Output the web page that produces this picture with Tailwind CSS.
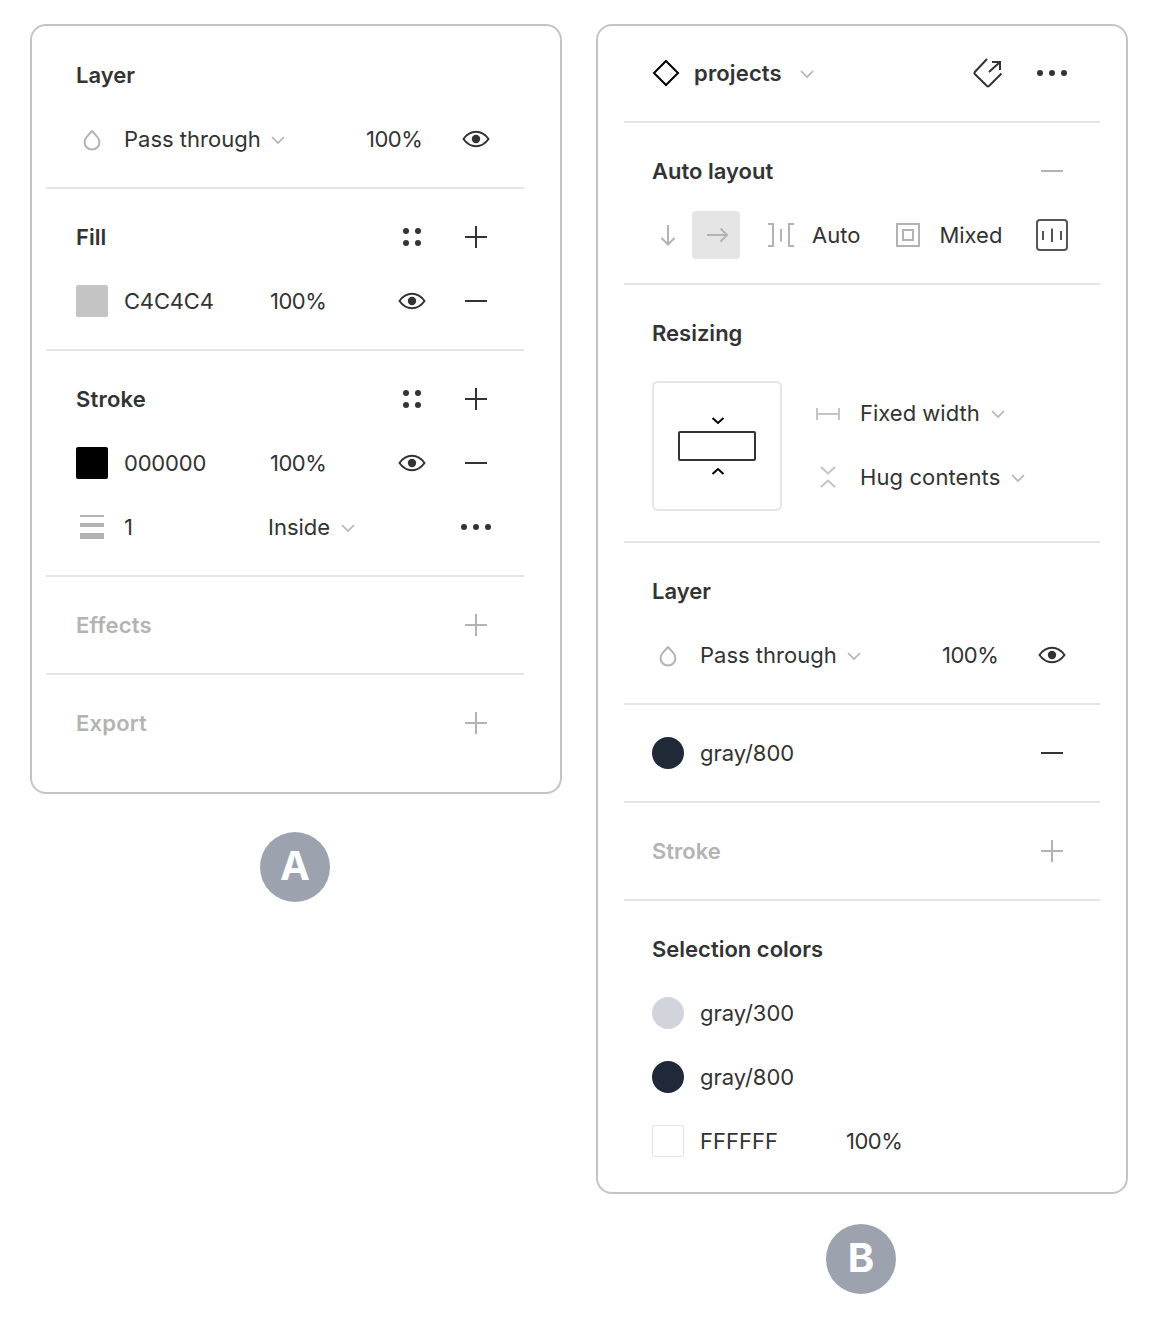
<!DOCTYPE html>
<html lang="en">
<head>
  <meta charset="UTF-8" />
  <title>Figma panels</title>
  <script src="https://cdn.jsdelivr.net/npm/@tailwindcss/browser@4"></script>
</head>
<body class="bg-white text-[#333333] font-['Inter',sans-serif] text-[22px] leading-8">
  <!-- shared icons -->
  <svg class="hidden">
    <symbol id="drop" viewBox="0 0 32 32"><path d="M16 8 L21.5 14.2 A7.4 7.4 0 1 1 10.5 14.2 Z" fill="none" stroke="currentColor" stroke-width="2" stroke-linejoin="round"/></symbol>
    <symbol id="chev" viewBox="0 0 16 16"><path d="M2 6 L8 12 L14 6" fill="none" stroke="currentColor" stroke-width="1.6"/></symbol>
    <symbol id="eye" viewBox="0 0 32 32"><path d="M3.5 16 C7 11 11 8.8 16 8.8 S25 11 28.5 16 C25 21 21 23.2 16 23.2 S7 21 3.5 16 Z" fill="none" stroke="currentColor" stroke-width="2"/><circle cx="16" cy="16" r="4.2" fill="currentColor"/></symbol>
    <symbol id="plus" viewBox="0 0 32 32"><path d="M5 16 H27 M16 5 V27" fill="none" stroke="currentColor" stroke-width="2"/></symbol>
    <symbol id="minus" viewBox="0 0 32 32"><path d="M5 16 H27" fill="none" stroke="currentColor" stroke-width="2"/></symbol>
    <symbol id="four" viewBox="0 0 32 32"><circle cx="10" cy="10" r="3" fill="currentColor"/><circle cx="22" cy="10" r="3" fill="currentColor"/><circle cx="10" cy="22" r="3" fill="currentColor"/><circle cx="22" cy="22" r="3" fill="currentColor"/></symbol>
    <symbol id="more" viewBox="0 0 32 32"><circle cx="4" cy="16" r="3" fill="currentColor"/><circle cx="16" cy="16" r="3" fill="currentColor"/><circle cx="28" cy="16" r="3" fill="currentColor"/></symbol>
  </svg>

  <div class="flex items-start gap-[34px] pl-[30px] pt-[24px]">
    <!-- Panel A -->
    <div class="w-[532px]">
      <div class="h-[770px] border-2 border-[#c4c4c4] rounded-2xl pl-[14px] pr-[36px]">
        <section class="pt-[33px] pb-8 pl-[30px] pr-8 border-b-2 border-[#e5e5e5] flex flex-col gap-8">
          <div class="h-8 font-semibold">Layer</div>
          <div class="h-8 flex items-center">
            <svg class="w-8 h-8 text-[#b3b3b3]"><use href="#drop"/></svg>
            <div class="ml-4 w-[242px] flex items-center gap-[9px]">Pass through <svg class="w-4 h-4 text-[#b3b3b3]"><use href="#chev"/></svg></div>
            <span class="tracking-[-0.5px]">100%</span>
            <svg class="ml-auto w-8 h-8"><use href="#eye"/></svg>
          </div>
        </section>

        <section class="py-8 pl-[30px] pr-8 border-b-2 border-[#e5e5e5] flex flex-col gap-8">
          <div class="h-8 flex items-center justify-between">
            <span class="font-semibold">Fill</span>
            <div class="flex gap-8">
              <svg class="w-8 h-8"><use href="#four"/></svg>
              <svg class="w-8 h-8"><use href="#plus"/></svg>
            </div>
          </div>
          <div class="h-8 flex items-center">
            <div class="w-8 h-8 bg-[#c4c4c4] rounded-[2px]"></div>
            <span class="ml-4 w-[146px] tracking-[-0.2px]">C4C4C4</span>
            <span class="tracking-[-0.5px]">100%</span>
            <div class="ml-auto flex gap-8">
              <svg class="w-8 h-8"><use href="#eye"/></svg>
              <svg class="w-8 h-8"><use href="#minus"/></svg>
            </div>
          </div>
        </section>

        <section class="py-8 pl-[30px] pr-8 border-b-2 border-[#e5e5e5] flex flex-col gap-8">
          <div class="h-8 flex items-center justify-between">
            <span class="font-semibold tracking-[0.2px]">Stroke</span>
            <div class="flex gap-8">
              <svg class="w-8 h-8"><use href="#four"/></svg>
              <svg class="w-8 h-8"><use href="#plus"/></svg>
            </div>
          </div>
          <div class="h-8 flex items-center">
            <div class="w-8 h-8 bg-black rounded-[2px]"></div>
            <span class="ml-4 w-[146px] tracking-[-0.2px]">000000</span>
            <span class="tracking-[-0.5px]">100%</span>
            <div class="ml-auto flex gap-8">
              <svg class="w-8 h-8"><use href="#eye"/></svg>
              <svg class="w-8 h-8"><use href="#minus"/></svg>
            </div>
          </div>
          <div class="h-8 flex items-center">
            <svg class="w-8 h-8 text-[#b3b3b3]" viewBox="0 0 32 32"><rect x="4" y="4" width="24" height="2" fill="currentColor"/><rect x="4" y="12" width="24" height="4" fill="currentColor"/><rect x="4" y="22" width="24" height="6" fill="currentColor"/></svg>
            <span class="ml-4 w-[144px]">1</span>
            <div class="flex items-center gap-[10px]">Inside <svg class="w-4 h-4 text-[#b3b3b3]"><use href="#chev"/></svg></div>
            <svg class="ml-auto w-8 h-8"><use href="#more"/></svg>
          </div>
        </section>

        <section class="py-8 pl-[30px] pr-8 border-b-2 border-[#e5e5e5]">
          <div class="h-8 flex items-center justify-between text-[#b3b3b3]">
            <span class="font-semibold tracking-[0.2px]">Effects</span>
            <svg class="w-8 h-8"><use href="#plus"/></svg>
          </div>
        </section>

        <section class="py-8 pl-[30px] pr-8">
          <div class="h-8 flex items-center justify-between text-[#b3b3b3]">
            <span class="font-semibold tracking-[0.2px]">Export</span>
            <svg class="w-8 h-8"><use href="#plus"/></svg>
          </div>
        </section>
      </div>
      <div class="mt-[38px] ml-[230px] w-[70px] h-[70px] pb-[2px] rounded-full bg-[#9ca3af] text-white text-[40px] font-bold flex items-center justify-center">A</div>
    </div>

    <!-- Panel B -->
    <div class="w-[532px]">
      <div class="h-[1170px] border-2 border-[#c4c4c4] rounded-2xl pl-[26px] pr-[26px]">
        <section class="pt-[31px] pb-8 pl-[28px] pr-8 border-b-2 border-[#e5e5e5]">
          <div class="h-8 flex items-center -ml-[2px]">
            <svg class="w-8 h-8 text-black" viewBox="0 0 32 32"><path d="M16 4 L28 16 L16 28 L4 16 Z" fill="none" stroke="currentColor" stroke-width="2"/></svg>
            <span class="ml-3 font-semibold tracking-[0.15px]">projects</span>
            <svg class="ml-[17px] w-4 h-4 text-[#b3b3b3]"><use href="#chev"/></svg>
            <svg class="ml-auto w-8 h-8" viewBox="0 0 32 32"><path d="M15 2 L2.8 15 A1.5 1.5 0 0 0 2.8 17 L15 29 A1.5 1.5 0 0 0 17 29 L29.5 16.5 M17 15 L28 5 M20 5 H28 V13" fill="none" stroke="currentColor" stroke-width="2"/></svg>
            <svg class="ml-8 w-8 h-8"><use href="#more"/></svg>
          </div>
        </section>

        <section class="py-8 pl-[28px] pr-8 border-b-2 border-[#e5e5e5] flex flex-col gap-8">
          <div class="h-8 flex items-center justify-between">
            <span class="font-semibold">Auto layout</span>
            <svg class="w-8 h-8 text-[#b3b3b3]"><use href="#minus"/></svg>
          </div>
          <div class="h-8 flex items-center">
            <svg class="w-8 h-8 text-[#b3b3b3]" viewBox="0 0 32 32"><path d="M16 6 V25 M9.5 19 L16 25.5 L22.5 19" fill="none" stroke="currentColor" stroke-width="2"/></svg>
            <div class="ml-2 w-12 h-12 shrink-0 bg-[#e5e5e5] rounded-[4px] text-[#b3b3b3]">
              <svg class="w-12 h-12" viewBox="0 0 48 48"><path d="M15 24 H35 M28.5 17.5 L35 24 L28.5 30.5" fill="none" stroke="currentColor" stroke-width="2"/></svg>
            </div>
            <svg class="ml-[25px] w-8 h-8 text-[#b3b3b3]" viewBox="0 0 32 32"><path d="M3 5 H8 V27 H3 M29 5 H24 V27 H29 M16 10 V22.5" fill="none" stroke="currentColor" stroke-width="2"/></svg>
            <span class="ml-[15px]">Auto</span>
            <svg class="ml-8 w-8 h-8 text-[#b3b3b3]" viewBox="0 0 32 32"><rect x="5" y="5" width="22" height="22" fill="none" stroke="currentColor" stroke-width="2"/><rect x="11" y="11" width="10" height="10" fill="none" stroke="currentColor" stroke-width="2"/></svg>
            <span class="ml-[15px]">Mixed</span>
            <svg class="ml-auto w-8 h-8 text-[#555555]" viewBox="0 0 32 32"><rect x="1" y="1" width="30" height="30" rx="3" fill="none" stroke="currentColor" stroke-width="2"/><path d="M7 12 V21 M16 9.5 V23 M25 12 V21" fill="none" stroke="currentColor" stroke-width="2"/></svg>
          </div>
        </section>

        <section class="pt-8 pb-[30px] pl-[28px] pr-8 border-b-2 border-[#e5e5e5] flex flex-col gap-8">
          <div class="h-8 font-semibold">Resizing</div>
          <div class="flex items-start gap-[30px]">
            <svg class="w-[130px] h-[130px]" viewBox="0 0 130 130">
              <rect x="1" y="1" width="128" height="128" rx="5" fill="none" stroke="#e5e5e5" stroke-width="2"/>
              <rect x="27" y="51" width="76" height="28" rx="1" fill="none" stroke="#333333" stroke-width="2"/>
              <path d="M60.5 37 L66 42 L71.5 37 M60.5 93 L66 88 L71.5 93" fill="none" stroke="#000000" stroke-width="2"/>
            </svg>
            <div class="mt-4 flex flex-col gap-8">
              <div class="h-8 flex items-center">
                <svg class="w-8 h-8 text-[#c4c4c4]" viewBox="0 0 32 32"><path d="M5 11 V23 M27 11 V23 M5 17 H27" fill="none" stroke="currentColor" stroke-width="2"/></svg>
                <div class="ml-4 flex items-center gap-[10px]">Fixed width <svg class="w-4 h-4 text-[#b3b3b3]"><use href="#chev"/></svg></div>
              </div>
              <div class="h-8 flex items-center">
                <svg class="w-8 h-8 text-[#c4c4c4]" viewBox="0 0 32 32"><path d="M9 6 L16 12.5 L23 6 M9 26 L16 19.5 L23 26" fill="none" stroke="currentColor" stroke-width="2"/></svg>
                <div class="ml-4 flex items-center gap-[10px] tracking-[0.1px]">Hug contents <svg class="w-4 h-4 text-[#b3b3b3]"><use href="#chev"/></svg></div>
              </div>
            </div>
          </div>
        </section>

        <section class="py-8 pl-[28px] pr-8 border-b-2 border-[#e5e5e5] flex flex-col gap-8">
          <div class="h-8 font-semibold">Layer</div>
          <div class="h-8 flex items-center">
            <svg class="w-8 h-8 text-[#b3b3b3]"><use href="#drop"/></svg>
            <div class="ml-4 w-[242px] flex items-center gap-[9px]">Pass through <svg class="w-4 h-4 text-[#b3b3b3]"><use href="#chev"/></svg></div>
            <span class="tracking-[-0.5px]">100%</span>
            <svg class="ml-auto w-8 h-8"><use href="#eye"/></svg>
          </div>
        </section>

        <section class="py-8 pl-[28px] pr-8 border-b-2 border-[#e5e5e5]">
          <div class="h-8 flex items-center">
            <div class="w-8 h-8 rounded-full bg-[#1f2937]"></div>
            <span class="ml-4">gray/800</span>
            <svg class="ml-auto w-8 h-8"><use href="#minus"/></svg>
          </div>
        </section>

        <section class="py-8 pl-[28px] pr-8 border-b-2 border-[#e5e5e5]">
          <div class="h-8 flex items-center justify-between text-[#b3b3b3]">
            <span class="font-semibold">Stroke</span>
            <svg class="w-8 h-8"><use href="#plus"/></svg>
          </div>
        </section>

        <section class="py-8 pl-[28px] pr-8 flex flex-col gap-8">
          <div class="h-8 font-semibold">Selection colors</div>
          <div class="h-8 flex items-center">
            <div class="w-8 h-8 rounded-full bg-[#d1d5db]"></div>
            <span class="ml-4">gray/300</span>
          </div>
          <div class="h-8 flex items-center">
            <div class="w-8 h-8 rounded-full bg-[#1f2937]"></div>
            <span class="ml-4">gray/800</span>
          </div>
          <div class="h-8 flex items-center">
            <div class="w-8 h-8 border border-[#e5e5e5] rounded-[2px]"></div>
            <span class="ml-4 w-[146px]">FFFFFF</span>
            <span class="tracking-[-0.5px]">100%</span>
          </div>
        </section>
      </div>
      <div class="mt-[30px] ml-[230px] w-[70px] h-[70px] pb-[2px] rounded-full bg-[#9ca3af] text-white text-[40px] font-bold flex items-center justify-center">B</div>
    </div>
  </div>
</body>
</html>
